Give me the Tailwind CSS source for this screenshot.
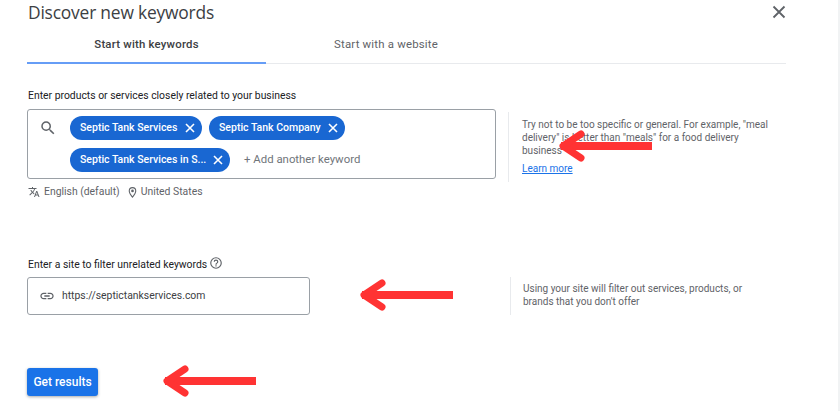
<!DOCTYPE html>
<html lang="en">
<head>
  <meta charset="UTF-8" />
  <title>Discover new keywords</title>
  <script src="https://cdn.jsdelivr.net/npm/@tailwindcss/browser@4"></script>
</head>
<body class="bg-white font-['Roboto',sans-serif] text-[#3c4043] w-[840px] h-[411px] overflow-hidden relative">
  <div class="absolute right-0 top-0 w-[2px] h-full bg-[#f1f3f4]"></div>

  <div class="w-[759px] ml-[27px]">
    <!-- header -->
    <div class="flex justify-between items-center h-[24px]">
      <h1 class="text-[17.4px] leading-[24px] text-[#3c4043] font-['Open_Sans',sans-serif] tracking-[-0.2px] ml-[1px]">Discover new keywords</h1>
      <svg class="w-[22px] h-[22px] mr-[-4px] text-[#5f6368]" viewBox="0 0 24 24" fill="none" stroke="currentColor" stroke-width="2"><path d="M6 6l12 12M18 6L6 18"/></svg>
    </div>

    <!-- tabs -->
    <div class="flex w-[759px] h-[40px] border-b border-[#e8eaed] text-[11.4px] font-medium">
      <div class="w-[239px] h-[40px] pt-[3px] border-b-2 border-[#669df6] flex items-center justify-center text-[#3c4043] tracking-[0.2px]">Start with keywords</div>
      <div class="w-[240px] pt-[3px] flex items-center justify-center text-[#5f6368] tracking-[0.2px] font-normal">Start with a website</div>
    </div>

    <!-- keywords -->
    <p class="text-[10.4px] leading-[14px] mt-[25px] ml-[1px] text-[#202124]">Enter products or services closely related to your business</p>
    <div class="flex mt-[6px]">
      <div class="w-[469px] h-[70px] border border-[#9aa0a6] rounded-[3px] flex pl-[11px] pt-[6px]">
        <svg class="w-[18px] h-[18px] mt-[3px] text-[#5f6368] shrink-0" viewBox="0 0 24 24" fill="currentColor"><path d="M15.5 14h-.79l-.28-.27A6.47 6.47 0 0 0 16 9.5 6.5 6.5 0 1 0 9.5 16c1.61 0 3.09-.59 4.23-1.57l.27.28v.79l5 4.99L20.49 19l-4.99-5zm-6 0C7.01 14 5 11.99 5 9.5S7.01 5 9.5 5 14 7.01 14 9.5 11.99 14 9.5 14z"/></svg>
        <div class="ml-[13px] flex flex-col gap-[8px] text-[10.5px] font-medium text-white">
          <div class="flex gap-[7px]">
            <div class="w-[132px] h-[24px] bg-[#1967d2] rounded-full flex items-center justify-between pl-[10px] pr-[6px]">
              <span>Septic Tank Services</span>
              <svg class="w-[12px] h-[12px]" viewBox="0 0 12 12" fill="none" stroke="currentColor" stroke-width="1.6"><path d="M2 2l8 8M10 2l-8 8"/></svg>
            </div>
            <div class="w-[136px] h-[24px] bg-[#1967d2] rounded-full flex items-center justify-between pl-[10px] pr-[4px]">
              <span>Septic Tank Company</span>
              <svg class="w-[12px] h-[12px] mr-[2px]" viewBox="0 0 12 12" fill="none" stroke="currentColor" stroke-width="1.6"><path d="M2 2l8 8M10 2l-8 8"/></svg>
            </div>
          </div>
          <div class="flex items-center">
            <div class="w-[160px] h-[24px] bg-[#1967d2] rounded-full flex items-center justify-between pl-[10px] pr-[6px]">
              <span>Septic Tank Services in S...</span>
              <svg class="w-[12px] h-[12px]" viewBox="0 0 12 12" fill="none" stroke="currentColor" stroke-width="1.6"><path d="M2 2l8 8M10 2l-8 8"/></svg>
            </div>
            <span class="ml-[14px] text-[11.4px] font-normal text-[#70757a]">+ Add another keyword</span>
          </div>
        </div>
      </div>
      <div class="ml-[12px] mt-[3px] h-[70px] border-l border-[#e8eaed] pl-[13px] pt-[6px] w-[266px] text-[10px] leading-[13px] text-[#5f6368]">
        <p>Try not to be too specific or general. For example, "meal delivery" is better than "meals" for a food delivery business</p>
        <a class="block mt-[5px] text-[#1a73e8] underline">Learn more</a>
      </div>
    </div>
    <div class="flex items-center h-[14px] mt-[3px] ml-[1px] text-[10.4px] text-[#5f6368]">
      <svg class="w-[12px] h-[12px]" viewBox="0 0 24 24" fill="currentColor"><path d="M12.87 15.07l-2.54-2.51.03-.03A17.52 17.52 0 0 0 14.07 6H17V4h-7V2H8v2H1v2h11.17C11.5 7.92 10.44 9.75 9 11.35 8.07 10.32 7.3 9.19 6.69 8h-2c.73 1.63 1.73 3.17 2.98 4.56l-5.09 5.02L4 19l5-5 3.11 3.11.76-2.04zM18.5 10h-2L12 22h2l1.12-3h4.75L21 22h2l-4.5-12zm-2.62 7l1.62-4.33L19.12 17h-3.24z"/></svg>
      <span class="ml-[4px]">English (default)</span>
      <svg class="w-[13px] h-[13px] ml-[6px]" viewBox="0 0 24 24" fill="currentColor"><path d="M12 2a7 7 0 0 0-7 7c0 5.25 7 13 7 13s7-7.75 7-13a7 7 0 0 0-7-7zm0 2a5 5 0 0 1 5 5c0 2.88-2.88 7.19-5 9.88C9.92 16.21 7 11.85 7 9a5 5 0 0 1 5-5zm0 2.5A2.5 2.5 0 1 0 12 11.500 2.5 2.5 0 0 0 12 6.500z"/></svg>
      <span class="ml-[2px]">United States</span>
    </div>

    <!-- site filter -->
    <div class="flex items-center mt-[58px] h-[16px] ml-[1px] text-[10.4px] text-[#202124]">
      <span>Enter a site to filter unrelated keywords</span>
      <svg class="w-[14px] h-[14px] ml-[2px] mb-[4px] text-[#5f6368]" viewBox="0 0 24 24" fill="currentColor"><path d="M11 18h2v-2h-2v2zm1-16a10 10 0 1 0 0 20 10 10 0 0 0 0-20zm0 18a8 8 0 1 1 0-16 8 8 0 0 1 0 16zm0-14a4 4 0 0 0-4 4h2a2 2 0 1 1 4 0c0 2-3 1.750-3 5h2c0-2.250 3-2.500 3-5a4 4 0 0 0-4-4z"/></svg>
    </div>
    <div class="flex mt-[4px]">
      <div class="w-[283px] h-[38px] border border-[#9aa0a6] rounded-[3px] flex items-center pl-[11px]">
        <svg class="w-[16px] h-[16px] text-[#5f6368]" viewBox="0 0 24 24" fill="currentColor"><path d="M3.900 12c0-1.710 1.390-3.100 3.100-3.100h4V7H7c-2.760 0-5 2.240-5 5s2.240 5 5 5h4v-1.900H7c-1.710 0-3.100-1.390-3.100-3.100zM8 13h8v-2H8v2zm9-6h-4v1.900h4c1.710 0 3.100 1.390 3.100 3.100s-1.390 3.100-3.100 3.100h-4V17h4c2.760 0 5-2.240 5-5s-2.240-5-5-5z"/></svg>
        <span class="ml-[7px] text-[10.4px] text-[#3c4043]">https://septictankservices.com</span>
      </div>
      <div class="ml-[200px] h-[38px] border-l border-[#e8eaed] pl-[12px] pt-[6px] w-[258px] text-[10px] leading-[12.5px] text-[#5f6368]">
        <p>Using your site will filter out services, products, or brands that you don't offer</p>
      </div>
    </div>

    <button class="block mt-[53px] w-[71px] h-[28px] bg-[#1a73e8] text-white text-[12px] font-medium rounded-[3px] shadow-[0_1px_3px_rgba(60,64,67,0.45)]">Get results</button>
  </div>

  <!-- red annotation arrows -->
  <svg class="absolute left-[557px] top-[130px]" width="96" height="32" viewBox="0 0 96 32" fill="none" stroke="#ff3333"><path d="M4 16H95" stroke-width="8"/><path d="M24 4L6 16L24 28" stroke-width="7" stroke-linecap="round" stroke-linejoin="round"/></svg>
  <svg class="absolute left-[358px] top-[279px]" width="96" height="32" viewBox="0 0 96 32" fill="none" stroke="#ff3333"><path d="M4 16H95" stroke-width="8"/><path d="M24 4L6 16L24 28" stroke-width="7" stroke-linecap="round" stroke-linejoin="round"/></svg>
  <svg class="absolute left-[161px] top-[365px]" width="96" height="32" viewBox="0 0 96 32" fill="none" stroke="#ff3333"><path d="M4 16H95" stroke-width="8"/><path d="M24 4L6 16L24 28" stroke-width="7" stroke-linecap="round" stroke-linejoin="round"/></svg>
</body>
</html>
